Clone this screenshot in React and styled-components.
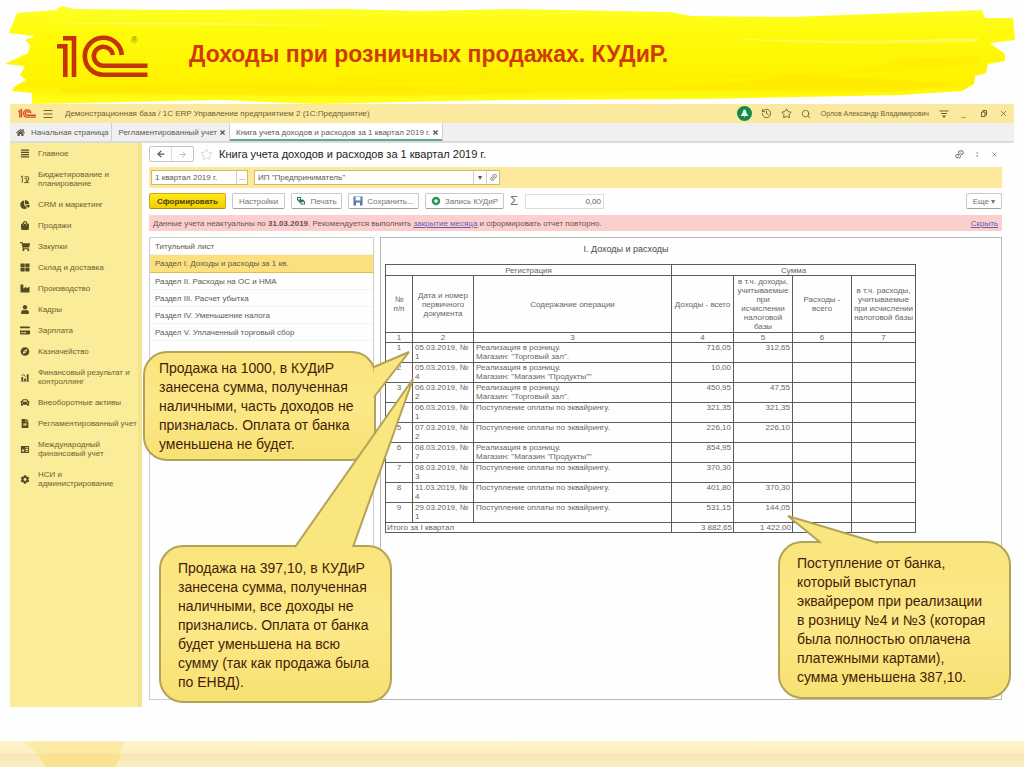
import React from "react";
import styled, { createGlobalStyle } from "styled-components";
import {
  FaCar,
  FaChartPie,
  FaCog,
  FaCompass,
  FaCreditCard,
  FaFileAlt,
  FaHome,
  FaIndustry,
  FaShoppingBag,
  FaShoppingCart,
  FaThLarge,
  FaUser,
} from "react-icons/fa";
import {
  ArrowLeft,
  ArrowRight,
  History,
  Menu,
  Search,
  Star,
  X,
} from "lucide-react";

const GlobalStyle = createGlobalStyle`
  * {
    box-sizing: border-box;
  }

  body {
    margin: 0;
    background: #fefefe;
    font-family: "Liberation Sans", Arial, sans-serif;
    font-size: 8px;
    line-height: 9px;
    color: #5c5950;
  }

  button,
  input {
    font-family: inherit;
    font-size: inherit;
    line-height: inherit;
    color: inherit;
  }

  svg {
    display: block;
    flex: none;
  }
`;

const BudgetIcon = () => (
  <svg width="10" height="10" viewBox="0 0 20 20" fill="none" stroke="currentColor" strokeWidth="2">
    <path d="M1 4l3-2v15M8 17h5V11h5V4M9 4h8M9 8h5M16 14v4M14 16h5" />
  </svg>
);

const FinanceIcon = () => (
  <svg width="10" height="10" viewBox="0 0 20 20" fill="currentColor">
    <path d="M2 9h4v9H2zM8 12h4v6H8zM14 3h4v15h-4zM1 18h18v1H1zM3 7l4-3 4 5 1-1-5-6-5 4z" />
  </svg>
);

const LinesIcon = () => (
  <svg width="10" height="10" viewBox="0 0 20 20" fill="currentColor">
    <path d="M1 1h18v3H1zM1 6h18v3H1zM1 11h18v3H1zM1 16h18v3H1z" />
  </svg>
);

const ReportIcon = () => (
  <svg width="10" height="10" viewBox="0 0 20 20" fill="currentColor" fillRule="evenodd">
    <path d="M1 2h18v16H1zM11 5v2h6V5zM11 9v2h6V9zM11 13v2h6v-2zM3 12l2 3h2l2-5-2 2-1-4z" />
  </svg>
);

const LinkIcon = ({ size }) => (
  <svg width={size} height={size} viewBox="0 0 20 20" fill="none" stroke="currentColor" strokeWidth="2">
    <path d="M8 8V4a2 2 0 0 1 2-2h6a2 2 0 0 1 2 2v4a2 2 0 0 1-2 2h-3M12 12v3a2 2 0 0 1-2 2H4a2 2 0 0 1-2-2v-3a2 2 0 0 1 2-2h3M7 13l6-7" />
  </svg>
);

const Logo = (props) => (
  <svg viewBox="56 35 92 43" fill="none" stroke="#c3340c" strokeWidth="4.6" {...props}>
    <path d="M57 46.300h8.300V77M63 38.300h11V77M121.800 55A18.500 18.500 0 1 0 103.500 74.700H147.500M112.800 55A9.500 9.500 0 1 0 103.500 65.700H147.500" />
  </svg>
);

const Page = styled.div`
  display: flex;
  flex-direction: column;
  min-height: 100vh;
`;

const Banner = styled.header`
  position: relative;
  display: flex;
  align-items: flex-start;
  height: 104px;
  padding: 35px 56px 0;

  > svg:first-child {
    position: absolute;
    inset: 0;
    width: 100%;
    height: 100%;
    z-index: -1;
  }

  sup {
    width: 58px;
    margin-left: -17px;
    font-size: 9px;
    line-height: 10px;
    color: #8a7a10;
  }

  h1 {
    margin: 6px 0 0;
    font-size: 23px;
    line-height: 26px;
    color: #cf3a08;
  }
`;

const Window = styled.main`
  position: relative;
  display: flex;
  flex: 1;
  flex-direction: column;
  margin: 0 10px 34px;
`;

const TitleBar = styled.div`
  display: flex;
  align-items: center;
  height: 19px;
  padding: 0 5px 0 8px;
  background: #fbe9a0;
  color: #6c6132;
`;

const AppTitle = styled.span`
  margin: 0 auto 0 5px;
`;

const TitleTools = styled.div`
  display: flex;
  align-items: center;
  gap: 9px;
`;

const UserName = styled.span`
  font-size: 7px;
`;

const IconButton = styled.button`
  display: flex;
  align-items: center;
  justify-content: center;
  min-width: ${({ $width }) => $width || 11}px;
  height: 14px;
  padding: 0;
  border: 0;
  background: none;
`;

const Bell = styled(IconButton)`
  width: 15px;
  height: 15px;
  border-radius: 50%;
  background: #148a48;
  color: #e8f7ec;
`;

const Tabs = styled.div`
  display: flex;
  height: 20px;
  background: #f0f0f0;
  border-bottom: 2px solid #dcdcdc;
`;

const Tab = styled.div`
  display: flex;
  align-items: center;
  gap: 2px;
  padding: 0 3px 0 6px;
  border-right: 1px solid #cfcfcf;
  background: ${({ $active }) => ($active ? "#fff" : "transparent")};
  box-shadow: ${({ $active }) => ($active ? "inset 0 -2px #5aab94" : "none")};

  button {
    display: flex;
    align-items: center;
    gap: 6px;
    padding: 0;
    border: 0;
    background: none;
    white-space: nowrap;
  }
`;

const Body = styled.div`
  display: flex;
  flex: 1;
`;

const Sidebar = styled.nav`
  display: flex;
  flex: none;
  flex-direction: column;
  gap: 12px;
  width: 132px;
  padding: 6px 0 0 10px;
  background: #faec98;
  border-right: 4px solid #f6e48c;
`;

const NavItem = styled.a`
  display: flex;
  align-items: center;
  gap: 8px;
  color: #6d6235;
  text-decoration: none;
  white-space: pre-line;

  svg {
    width: 10px;
    height: 9px;
    color: #544c24;
  }
`;

const Content = styled.section`
  display: flex;
  flex: 1;
  flex-direction: column;
  min-width: 0;
  padding: 3px 12px 7px 7px;
`;

const Heading = styled.div`
  display: flex;
  align-items: center;
  height: 16px;
  margin-bottom: 5px;

  h2 {
    margin: 0 auto 0 6px;
    font-size: 11px;
    font-weight: 400;
    line-height: 12px;
    color: #1c1c1c;
  }
`;

const Arrows = styled.div`
  display: flex;
  margin-right: 6px;
  border: 1px solid #c4c4c4;
  border-radius: 2px;

  button + button {
    border-left: 1px solid #ddd;
    color: #aaa;
  }
`;

const Filters = styled.div`
  display: flex;
  align-items: center;
  gap: 6px;
  height: 21px;
  margin-bottom: 5px;
  padding: 0 2px;
  background: #fde99c;
`;

const Field = styled.div`
  display: flex;
  width: ${({ $width }) => $width}px;
  height: 15px;
  border: 1px solid #cdbb72;
  background: #fff;

  input {
    flex: 1;
    min-width: 0;
    padding: 0 3px;
    border: 0;
    background: none;
  }

  button {
    height: 13px;
    border-left: 1px solid #d9d0a8;
  }
`;

const Toolbar = styled.div`
  display: flex;
  align-items: center;
  gap: 6px;
  height: 16px;
  margin-bottom: 6px;
`;

const ToolButton = styled.button`
  display: flex;
  align-items: center;
  justify-content: center;
  gap: 4px;
  width: ${({ $width }) => $width}px;
  height: 16px;
  padding: 0;
  border: 1px solid ${({ $primary }) => ($primary ? "#c9ad10" : "#c8c8c8")};
  border-bottom-color: ${({ $primary }) => ($primary ? "#a89008" : "#a2a2a2")};
  border-radius: 2px;
  background: ${({ $primary }) => ($primary ? "linear-gradient(#ffe81c, #f0cf00)" : "#fefefe")};
  color: ${({ $primary }) => ($primary ? "#4b4005" : "#77746c")};
  font-weight: ${({ $primary }) => ($primary ? 700 : 400)};
  white-space: nowrap;
`;

const Sigma = styled.span`
  width: 9px;
  font-size: 13px;
  line-height: 16px;
  color: #777;
`;

const SumInput = styled.input`
  width: 79px;
  height: 15px;
  margin-right: auto;
  padding: 0 2px;
  border: 1px solid #ddd;
  text-align: right;
`;

const Notice = styled.div`
  display: flex;
  align-items: center;
  justify-content: space-between;
  height: 16px;
  margin-bottom: 6px;
  padding: 0 4px;
  background: #fccfcf;
  color: #6f5050;

  a {
    color: #6a5cb0;
  }
`;

const Panels = styled.div`
  display: flex;
  flex: 1;
  gap: 6px;
`;

const Sections = styled.div`
  flex: none;
  width: 225px;
  border: 1px solid #cdcdcd;
`;

const SectionButton = styled.button`
  display: block;
  width: 100%;
  height: ${({ $active }) => ($active ? 18 : 17)}px;
  padding: 0 5px;
  border: 0;
  border-bottom: 1px solid ${({ $active }) => ($active ? "#dcbf50" : "#f4f4f4")};
  background: ${({ $active }) => ($active ? "#fde07e" : "transparent")};
  text-align: left;
`;

const Report = styled.div`
  flex: 1;
  min-width: 0;
  padding: 5px 4px;
  border: 1px solid #b8b8b8;

  h3 {
    width: 482px;
    margin: 0 0 9px;
    font-size: 9px;
    font-weight: 400;
    line-height: 12px;
    text-align: center;
    color: #4a4a4a;
  }
`;

const Ledger = styled.table`
  width: 530px;
  table-layout: fixed;
  border-collapse: collapse;
  color: #666;

  th,
  td {
    padding: 0 2px;
    border: 1px solid #5c5c5c;
    font-weight: 400;
    vertical-align: top;
  }

  th {
    vertical-align: middle;
    white-space: pre-line;
  }

  tbody tr {
    height: 20px;
  }

  td:nth-child(1) {
    text-align: center;
  }

  td:nth-child(n + 4) {
    text-align: right;
  }

  tfoot td {
    height: 10px;
    padding: 0 1px;
    text-align: right;
  }

  tfoot td:first-child {
    text-align: left;
  }
`;

const HeadRow = styled.tr`
  height: ${({ $height }) => $height}px;
`;

const Note = styled.aside`
  position: absolute;
  left: ${({ $left }) => $left}px;
  top: ${({ $top }) => $top}px;
  width: 233px;
  padding: ${({ $pad }) => $pad};
  border: 2px solid #b3a358;
  border-radius: 24px;
  background: linear-gradient(#fae47c, #fbe887 50%, #f8e173);
  font-size: 14px;
  line-height: 19px;
  color: #451c08;
  white-space: pre;

  svg {
    position: absolute;
    left: 0;
    top: 0;
    overflow: visible;
  }
`;

const Footer = styled.footer`
  height: 26px;
  background: linear-gradient(#fdf3cc, #fcefc0 12px, #f8e7b6 13px, #fbeec2);
`;

const navItems = [
  ["Главное", LinesIcon],
  ["Бюджетирование и\nпланирование", BudgetIcon],
  ["CRM и маркетинг", FaChartPie],
  ["Продажи", FaShoppingBag],
  ["Закупки", FaShoppingCart],
  ["Склад и доставка", FaThLarge],
  ["Производство", FaIndustry],
  ["Кадры", FaUser],
  ["Зарплата", FaCreditCard],
  ["Казначейство", FaCompass],
  ["Финансовый результат и\nконтроллинг", FinanceIcon],
  ["Внеоборотные активы", FaCar],
  ["Регламентированный учет", FaFileAlt],
  ["Международный\nфинансовый учет", ReportIcon],
  ["НСИ и\nадминистрирование", FaCog],
];

const sections = [
  "Титульный лист",
  "Раздел I. Доходы и расходы за 1 кв.",
  "Раздел II. Расходы на ОС и НМА",
  "Раздел III. Расчет убытка",
  "Раздел IV. Уменьшение налога",
  "Раздел V. Уплаченный торговый сбор",
];

const hall = 'Реализация в розницу.\nМагазин: "Торговый зал".';
const products = 'Реализация в розницу.\nМагазин: "Магазин "Продукты""';
const acquiring = "Поступление оплаты по эквайрингу.";

const rows = [
  ["05.03.2019, №\n1", hall, "716,05", "312,65"],
  ["05.03.2019, №\n4", products, "10,00", ""],
  ["06.03.2019, №\n2", hall, "450,95", "47,55"],
  ["06.03.2019, №\n1", acquiring, "321,35", "321,35"],
  ["07.03.2019, №\n2", acquiring, "226,10", "226,10"],
  ["08.03.2019, №\n7", products, "854,95", ""],
  ["08.03.2019, №\n3", acquiring, "370,30", ""],
  ["11.03.2019, №\n4", acquiring, "401,80", "370,30"],
  ["29.03.2019, №\n1", acquiring, "531,15", "144,05"],
];

const columnWidths = [27, 61, 198, 62, 59, 59, 64];

const Multiline = styled.td`
  white-space: pre;
`;

const BrushStroke = () => (
  <svg viewBox="0 0 1024 104" preserveAspectRatio="none">
    <defs>
      <linearGradient id="paint" x2="0" y2="1">
        <stop offset="0" stopColor="#fdff2a" />
        <stop offset="0.25" stopColor="#fffb0a" />
        <stop offset="0.8" stopColor="#fff200" />
        <stop offset="1" stopColor="#ffff1c" />
      </linearGradient>
    </defs>
    <path
      fill="url(#paint)"
      d="M17 13L55 10 62 6 74 9 180 10 345 9 420 11 512 9 670 12 692 16 790 17 900 13 982 10 985 18 1013 18 1015 40 990 43 1005 54 1005 61 988 64 986 73 975 76 974 84 962 91 900 95 700 99 512 100 400 102 318 104 220 100 32 104 32 93 12 91 14 87 26 80 20 75 25 66 5 64 28 53 30 45 25 40 35 36 9 33Z"
    />
    <path fill="#ffe600" opacity=".55" d="M60 87Q240 82 480 87T790 74Q900 80 960 84L890 92Q640 88 520 93T60 93Z" />
    <path fill="#ffe800" opacity=".4" d="M340 76Q500 66 690 72T890 60L980 56 980 64Q800 80 690 78T340 84Z" />
    <path fill="#fffa85" opacity=".6" d="M720 38Q830 43 980 38L975 42Q820 46 720 38ZM40 24Q190 20 350 27 180 24 40 24Z" />
  </svg>
);

// tail is a "baseStart tip baseEnd" polyline in the note's own coordinates
const Callout = ({ left, top, pad, tail, children }) => (
  <Note $left={left} $top={top} $pad={pad}>
    <svg width="1" height="1">
      <polyline points={tail} fill="#fae67f" stroke="#b3a358" strokeWidth="2" />
    </svg>
    {children}
  </Note>
);

const App = () => (
  <>
    <GlobalStyle />
    <Page>
      <Banner>
        <BrushStroke />
        <Logo width="92" height="43" />
        <sup>®</sup>
        <h1>Доходы при розничных продажах. КУДиР.</h1>
      </Banner>

      <Window>
        <TitleBar>
          <Logo width="18" height="9" stroke="#e04a22" strokeWidth="7" />
          <IconButton $width={24} aria-label="Меню">
            <Menu size={12} strokeWidth={2} />
          </IconButton>
          <AppTitle>Демонстрационная база / 1С ERP Управление предприятием 2 (1С:Предприятие)</AppTitle>
          <TitleTools>
            <Bell aria-label="Уведомления">
              <svg width="9" height="9" viewBox="0 0 18 18" fill="currentColor">
                <path d="M9 1c-3 0-3 4-4 7l-4 6h16l-4-6C12 5 12 1 9 1zM7 15h4l-2 2z" />
              </svg>
            </Bell>
            <IconButton aria-label="История"><History size={11} /></IconButton>
            <IconButton aria-label="Избранное"><Star size={11} /></IconButton>
            <IconButton aria-label="Поиск"><Search size={10} /></IconButton>
            <UserName>Орлов Александр Владимирович</UserName>
            <IconButton aria-label="Настройки окна">
              <svg width="10" height="10" viewBox="0 0 20 20" fill="currentColor">
                <path d="M1 3h18v2H1zM4 8h12v2H4zM6 13h8l-4 5z" />
              </svg>
            </IconButton>
            <IconButton aria-label="Свернуть">_</IconButton>
            <IconButton aria-label="Развернуть">
              <svg width="6" height="7" viewBox="0 0 12 14" fill="none" stroke="currentColor" strokeWidth="2">
                <path d="M4 4V1h7v9H8M1 4h7v9H1z" />
              </svg>
            </IconButton>
            <IconButton aria-label="Закрыть"><X size={9} /></IconButton>
          </TitleTools>
        </TitleBar>

        <Tabs>
          <Tab>
            <button><FaHome size={9} />Начальная страница</button>
          </Tab>
          <Tab>
            <button>Регламентированный учет</button>
            <button aria-label="Закрыть"><X size={7} strokeWidth={4} /></button>
          </Tab>
          <Tab $active>
            <button>Книга учета доходов и расходов за 1 квартал 2019 г.</button>
            <button aria-label="Закрыть"><X size={7} strokeWidth={4} /></button>
          </Tab>
        </Tabs>

        <Body>
          <Sidebar>
            {navItems.map(([label, Icon]) => (
              <NavItem href="#" key={label}>
                <Icon />
                {label}
              </NavItem>
            ))}
          </Sidebar>

          <Content>
            <Heading>
              <Arrows>
                <IconButton $width={21} aria-label="Назад"><ArrowLeft size={10} strokeWidth={3} /></IconButton>
                <IconButton $width={22} aria-label="Вперед"><ArrowRight size={9} /></IconButton>
              </Arrows>
              <Star size={13} strokeWidth={1} color="#b5b5b5" />
              <h2>Книга учета доходов и расходов за 1 квартал 2019 г.</h2>
              <IconButton $width={18} aria-label="Ссылка"><LinkIcon size={9} /></IconButton>
              <IconButton $width={18} aria-label="Еще">⁞</IconButton>
              <IconButton $width={16} aria-label="Закрыть"><X size={7} /></IconButton>
            </Heading>

            <Filters>
              <Field $width={97}>
                <input aria-label="Период" defaultValue="1 квартал 2019 г." />
                <IconButton aria-label="Выбрать период">...</IconButton>
              </Field>
              <Field $width={246}>
                <input aria-label="Организация" defaultValue={'ИП "Предприниматель"'} />
                <IconButton $width={13} aria-label="Список">▾</IconButton>
                <IconButton $width={13} aria-label="Открыть"><LinkIcon size={7} /></IconButton>
              </Field>
            </Filters>

            <Toolbar>
              <ToolButton $primary $width={77}>Сформировать</ToolButton>
              <ToolButton $width={53}>Настройки</ToolButton>
              <ToolButton $width={51}>
                <svg width="10" height="10" viewBox="0 0 20 20" fill="#2c7a56">
                  <path d="M2 2h8v5h4l4 4v6H9v-4H5V9H2zM4 4v3h4V4zM11 12h5v3h-5z" fillRule="evenodd" />
                </svg>
                Печать
              </ToolButton>
              <ToolButton $width={71}>
                <svg width="10" height="10" viewBox="0 0 20 20" fill="#5877a8">
                  <path d="M1 1h18v18H1zM5 2v7h10V2zM6 13v6h8v-6z" fillRule="evenodd" />
                </svg>
                Сохранить...
              </ToolButton>
              <ToolButton $width={79}>
                <svg width="10" height="10" viewBox="0 0 20 20" fill="none" stroke="#28985a" strokeWidth="5">
                  <circle cx="10" cy="10" r="6" />
                </svg>
                Запись КУДиР
              </ToolButton>
              <Sigma>Σ</Sigma>
              <SumInput aria-label="Сумма" defaultValue="0,00" />
              <ToolButton $width={36}>Еще ▾</ToolButton>
            </Toolbar>

            <Notice>
              <span>
                Данные учета неактуальны по <b>31.03.2019</b>. Рекомендуется выполнить{" "}
                <a href="#">закрытие месяца</a> и сформировать отчет повторно.
              </span>
              <a href="#">Скрыть</a>
            </Notice>

            <Panels>
              <Sections>
                {sections.map((name, i) => (
                  <SectionButton key={name} $active={i === 1}>{name}</SectionButton>
                ))}
              </Sections>

              <Report>
                <h3>I. Доходы и расходы</h3>
                <Ledger>
                  <colgroup>
                    {columnWidths.map((w, i) => (
                      <col key={i} width={w} />
                    ))}
                  </colgroup>
                  <thead>
                    <HeadRow $height={11}>
                      <th colSpan={3}>Регистрация</th>
                      <th colSpan={4}>Сумма</th>
                    </HeadRow>
                    <HeadRow $height={57}>
                      <th>{"№\nп/п"}</th>
                      <th>Дата и номер первичного документа</th>
                      <th>Содержание операции</th>
                      <th>Доходы - всего</th>
                      <th>в т.ч. доходы, учитываемые при исчислении налоговой базы</th>
                      <th>Расходы - всего</th>
                      <th>в т.ч. расходы, учитываемые при исчислении налоговой базы</th>
                    </HeadRow>
                    <HeadRow $height={10}>
                      {columnWidths.map((w, i) => (
                        <th key={i}>{i + 1}</th>
                      ))}
                    </HeadRow>
                  </thead>
                  <tbody>
                    {rows.map(([doc, text, income, taxable], i) => (
                      <tr key={i}>
                        <td>{i + 1}</td>
                        <Multiline>{doc}</Multiline>
                        <Multiline>{text}</Multiline>
                        <td>{income}</td>
                        <td>{taxable}</td>
                        <td />
                        <td />
                      </tr>
                    ))}
                  </tbody>
                  <tfoot>
                    <tr>
                      <td colSpan={3}>Итого за I квартал</td>
                      <td>3 882,65</td>
                      <td>1 422,00</td>
                      <td />
                      <td />
                    </tr>
                  </tfoot>
                </Ledger>
              </Report>
            </Panels>
          </Content>
        </Body>

        <Callout left={133} top={247} pad="6px 14px 5px" tail="229,14 264,-1 229,44">
          {"Продажа на 1000, в КУДиР\nзанесена сумма, полученная\nналичными, часть доходов не\nпризналась. Оплата от банка\nуменьшена не будет."}
        </Callout>
        <Callout left={149} top={441} pad="12px 17px 9px" tail="134,0 252,-168 192,0">
          {"Продажа на 397,10, в КУДиР\nзанесена сумма, полученная\nналичными, все доходы не\nпризнались. Оплата от банка\nбудет уменьшена на всю\nсумму (так как продажа была\nпо ЕНВД)."}
        </Callout>
        <Callout left={768} top={437} pad="11px 17px 10px" tail="41,0 8,-27 98,0">
          {"Поступление от банка,\nкоторый выступал\nэквайрером при реализации\nв розницу №4 и №3 (которая\nбыла полностью оплачена\nплатежными картами),\nсумма уменьшена 387,10."}
        </Callout>
      </Window>

      <Footer>
        <svg width="130" height="26" viewBox="0 0 130 26">
          <path fill="#fbe795" opacity=".7" d="M24 1h101l-6 12H38z" />
          <path fill="#f9de84" opacity=".8" d="M38 13h84l-7 13H46z" />
        </svg>
      </Footer>
    </Page>
  </>
);

export default App;
